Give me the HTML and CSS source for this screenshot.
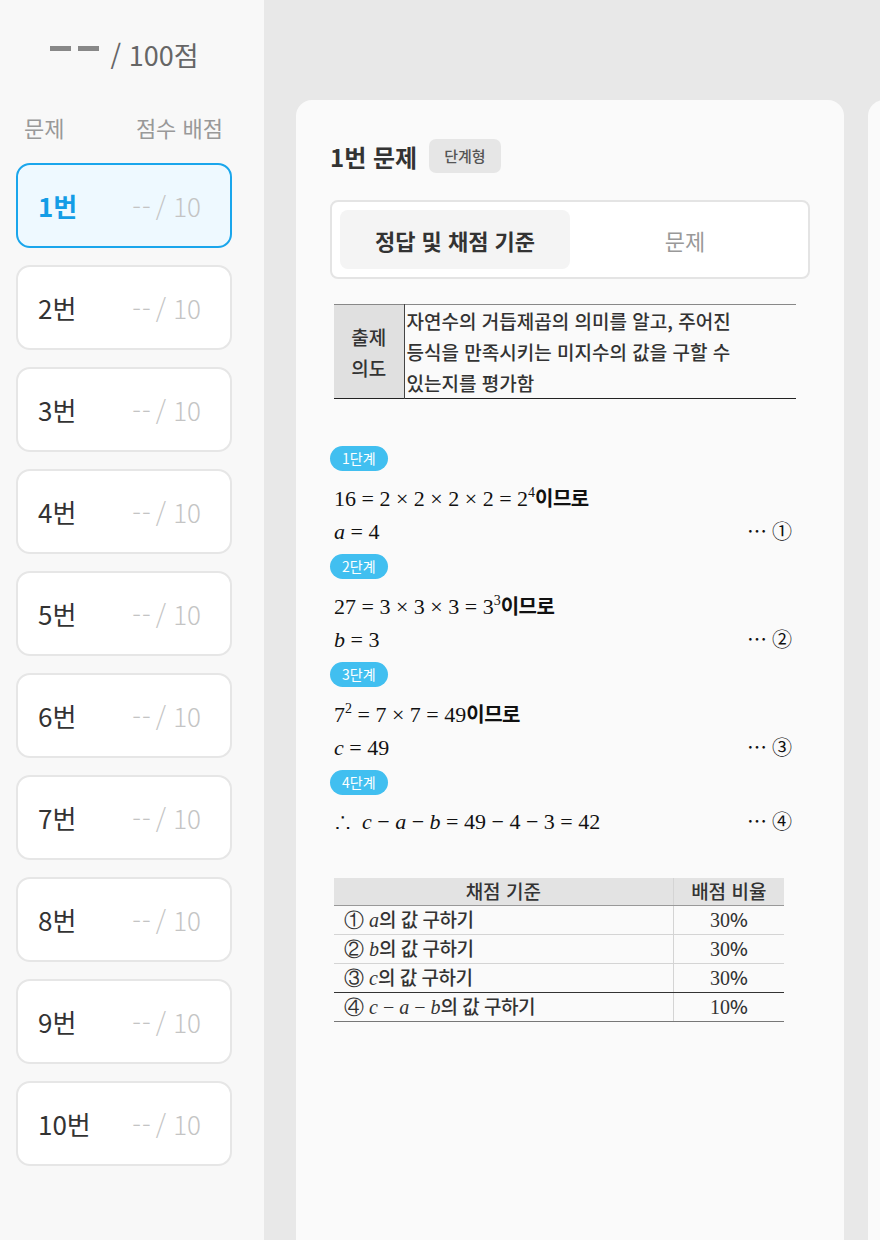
FILE: index.html
```html
<html lang="ko">
<head>
    <meta charset="UTF-8">
    <meta name="viewport" content="width=device-width, initial-scale=1.0">
    <title>채점</title>
    <link rel="stylesheet" href="styles.css">
</head>
<body>
<div class="page">

    <aside class="sidebar">
        <div class="total"><span class="bar"></span><span class="bar"></span><span class="total-text">/ 100점</span></div>
        <div class="col-head"><span>문제</span><span>점수 배점</span></div>
        <ul class="q-list">
            <li class="q-item active"><span class="q-num">1번</span><span class="q-score"><span class="dash">--</span>/ 10</span></li>
            <li class="q-item"><span class="q-num">2번</span><span class="q-score"><span class="dash">--</span>/ 10</span></li>
            <li class="q-item"><span class="q-num">3번</span><span class="q-score"><span class="dash">--</span>/ 10</span></li>
            <li class="q-item"><span class="q-num">4번</span><span class="q-score"><span class="dash">--</span>/ 10</span></li>
            <li class="q-item"><span class="q-num">5번</span><span class="q-score"><span class="dash">--</span>/ 10</span></li>
            <li class="q-item"><span class="q-num">6번</span><span class="q-score"><span class="dash">--</span>/ 10</span></li>
            <li class="q-item"><span class="q-num">7번</span><span class="q-score"><span class="dash">--</span>/ 10</span></li>
            <li class="q-item"><span class="q-num">8번</span><span class="q-score"><span class="dash">--</span>/ 10</span></li>
            <li class="q-item"><span class="q-num">9번</span><span class="q-score"><span class="dash">--</span>/ 10</span></li>
            <li class="q-item"><span class="q-num">10번</span><span class="q-score"><span class="dash">--</span>/ 10</span></li>
        </ul>
    </aside>

    <main class="main">
        <section class="card">
            <div class="card-title"><h2>1번 문제</h2><span class="type-badge">단계형</span></div>

            <div class="tabs">
                <div class="tab active">정답 및 채점 기준</div>
                <div class="tab">문제</div>
            </div>

            <div class="answer">
                <table class="intent">
                    <tr>
                        <th>출제<br>의도</th>
                        <td>자연수의 거듭제곱의 의미를 알고, 주어진<br>등식을 만족시키는 미지수의 값을 구할 수<br>있는지를 평가함</td>
                    </tr>
                </table>

                <div class="steps">
                    <div class="step-block">
                        <span class="step">1단계</span>
                        <div class="line"><span>16 = 2 × 2 × 2 × 2 = 2<sup>4</sup><span class="ko">이므로</span></span></div>
                        <div class="line"><span><i>a</i> = 4</span><span class="mark">⋯ ①</span></div>
                    </div>
                    <div class="step-block">
                        <span class="step">2단계</span>
                        <div class="line"><span>27 = 3 × 3 × 3 = 3<sup>3</sup><span class="ko">이므로</span></span></div>
                        <div class="line"><span><i>b</i> = 3</span><span class="mark">⋯ ②</span></div>
                    </div>
                    <div class="step-block">
                        <span class="step">3단계</span>
                        <div class="line"><span>7<sup>2</sup> = 7 × 7 = 49<span class="ko">이므로</span></span></div>
                        <div class="line"><span><i>c</i> = 49</span><span class="mark">⋯ ③</span></div>
                    </div>
                    <div class="step-block">
                        <span class="step">4단계</span>
                        <div class="line"><span>∴&nbsp; <i>c</i> − <i>a</i> − <i>b</i> = 49 − 4 − 3 = 42</span><span class="mark">⋯ ④</span></div>
                    </div>
                </div>

                <table class="criteria">
                    <tr><th>채점 기준</th><th>배점 비율</th></tr>
                    <tr><td>① <i>a</i><span class="ko">의 값 구하기</span></td><td class="pct">30<span class="ko">%</span></td></tr>
                    <tr><td>② <i>b</i><span class="ko">의 값 구하기</span></td><td class="pct">30<span class="ko">%</span></td></tr>
                    <tr class="sep"><td>③ <i>c</i><span class="ko">의 값 구하기</span></td><td class="pct">30<span class="ko">%</span></td></tr>
                    <tr class="last"><td>④ <i>c</i> − <i>a</i> − <i>b</i><span class="ko">의 값 구하기</span></td><td class="pct">10<span class="ko">%</span></td></tr>
                </table>
            </div>
        </section>

        <section class="card next"></section>
    </main>

</div>
</body>
</html>
```

FILE: styles.css
```css
* {
    box-sizing: border-box;
    margin: 0;
    padding: 0;
}
body {
    background-color: #e8e8e8;
    font-family: "Noto Sans CJK KR", "Noto Sans", sans-serif;
    color: #333;
    overflow: hidden;
}
.page {
    display: flex;
    height: 1240px;
}

/* sidebar */
.sidebar {
    width: 264px;
    flex-shrink: 0;
    background-color: #f8f8f8;
    padding: 0 32px 0 16px;
}
.total {
    display: flex;
    justify-content: center;
    align-items: center;
    height: 110px;
    padding-bottom: 2px;
}
.bar {
    display: inline-block;
    width: 21px;
    height: 5px;
    background-color: #888;
    margin-right: 7px;
    position: relative;
    top: -6px;
}
.total-text {
    font-size: 27px;
    color: #666;
    margin-left: 5px;
}
.col-head {
    display: flex;
    justify-content: space-between;
    padding: 0 9px 0 8px;
    font-size: 22px;
    color: #999;
    height: 34px;
    line-height: 34px;
}
.q-list {
    list-style: none;
    margin-top: 19px;
    display: flex;
    flex-direction: column;
    gap: 17px;
}
.q-item {
    display: flex;
    justify-content: space-between;
    align-items: center;
    height: 85px;
    padding: 0 29px 0 20px;
    background-color: #fff;
    border: 2px solid #e6e6e6;
    border-radius: 14px;
}
.q-num {
    font-size: 26px;
    color: #333;
}
.q-score {
    font-size: 26px;
    color: #c4c4c4;
    font-weight: 300;
}
.dash {
    letter-spacing: 1px;
    margin-right: 4px;
}
.q-item.active {
    background-color: #eef9ff;
    border-color: #1aa6ec;
}
.q-item.active .q-num {
    color: #139de6;
    font-weight: bold;
}

/* main */
.main {
    display: flex;
    gap: 24px;
    padding: 100px 0 0 32px;
    overflow: hidden;
    flex: 1;
}
.card {
    width: 548px;
    flex-shrink: 0;
    min-height: 1200px;
    background-color: #fafafa;
    border-radius: 16px;
    padding: 39px 34px 0 34px;
}
.card.next {
    width: 300px;
}
.card-title {
    display: flex;
    align-items: center;
    gap: 12px;
    height: 34px;
}
.card-title h2 {
    font-size: 24px;
    font-weight: bold;
    color: #333;
}
.type-badge {
    font-size: 15px;
    font-weight: 500;
    color: #555;
    background-color: #e6e6e6;
    border-radius: 7px;
    padding: 0 15px;
    height: 34px;
    line-height: 34px;
}
.tabs {
    display: flex;
    margin-top: 27px;
    height: 79px;
    padding: 8px;
    background-color: #fff;
    border: 2px solid #e4e4e4;
    border-radius: 8px;
    width: 480px;
}
.tab {
    flex: 1;
    display: flex;
    justify-content: center;
    align-items: center;
    font-size: 22px;
    color: #999;
    border-radius: 8px;
}
.tab.active {
    background-color: #f4f4f4;
    color: #333;
    font-weight: bold;
}

/* answer sheet */
.answer {
    padding-left: 4px;
    color: #222;
}
.intent {
    margin-top: 25px;
    width: 462px;
    border-collapse: collapse;
    border-top: 1px solid #888;
    border-bottom: 1px solid #222;
    font-size: 19px;
    font-weight: 500;
}
.intent th {
    width: 70px;
    background-color: #e0e0e0;
    border-right: 1px solid #444;
    font-weight: 500;
    line-height: 31px;
    color: #333;
}
.intent td {
    line-height: 31px;
    padding: 0 0 0 2px;
    vertical-align: top;
}
.steps {
    margin-top: 47px;
    width: 462px;
    font-family: "Liberation Serif", serif;
    font-size: 22px;
    color: #111;
    display: flex;
    flex-direction: column;
    gap: 5px;
}
.step {
    display: inline-block;
    font-family: "Noto Sans CJK KR", sans-serif;
    font-size: 14px;
    color: #fff;
    background-color: #41bff0;
    border-radius: 13px;
    height: 25px;
    line-height: 25px;
    padding: 0 12px;
    margin-left: -4px;
    margin-bottom: 10px;
}
.line {
    display: flex;
    justify-content: space-between;
    align-items: baseline;
    height: 34px;
    line-height: 34px;
}
.line sup {
    font-size: 14px;
    vertical-align: 9px;
    line-height: 0;
}
.ko {
    font-family: "Noto Sans CJK KR", sans-serif;
    font-size: 20px;
    font-weight: bold;
    letter-spacing: -0.5px;
}
.mark {
    font-size: 20px;
    padding-right: 4px;
}
.criteria {
    margin-top: 39px;
    width: 450px;
    border-collapse: collapse;
    font-family: "Liberation Serif", serif;
    font-size: 20px;
}
.criteria th {
    background-color: #e3e3e3;
    font-family: "Noto Sans CJK KR", sans-serif;
    font-size: 19px;
    font-weight: 500;
    height: 27px;
    line-height: 26px;
    border-bottom: 1px solid #999;
}
.criteria th:first-child {
    width: 339px;
}
.criteria td {
    height: 29px;
    line-height: 26px;
    border-bottom: 1px solid #d4d4d4;
    padding-left: 10px;
}
.criteria td:first-child,
.criteria th:first-child {
    border-right: 1px solid #d4d4d4;
}
.criteria .ko {
    font-size: 19px;
    font-weight: 500;
}
.criteria td.pct {
    text-align: center;
    padding-left: 0;
}
.criteria tr.sep td {
    border-bottom-color: #333;
}
.criteria tr.last td {
    border-bottom-color: #777;
}
```
